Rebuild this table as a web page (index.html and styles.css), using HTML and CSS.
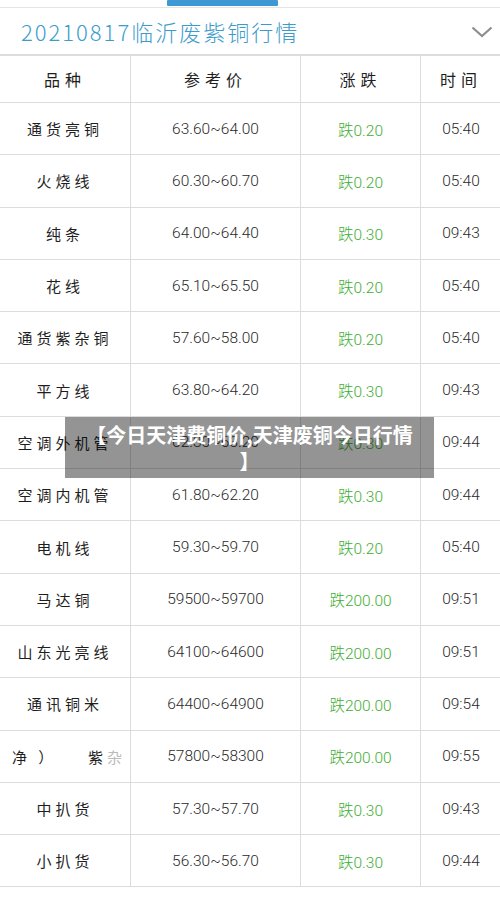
FILE: index.html
```html
<!DOCTYPE html>
<html lang="zh-CN">
<head>
  <meta charset="UTF-8">
  <title>临沂废紫铜行情</title>
  <link rel="stylesheet" href="styles.css">
</head>
<body>

  <div class="page">
    <div class="tabs">
      <div class="tab-active"></div>
    </div>

    <div class="title-bar">
      <span class="title">20210817临沂废紫铜行情</span>
      <svg class="chevron" width="22" height="12" viewBox="0 0 22 12">
        <path d="M1.5 1.5 L11 10 L20.5 1.5" fill="none" stroke="#8e8e8e" stroke-width="2.2"/>
      </svg>
    </div>

    <table class="quotes">
      <thead>
        <tr>
          <th class="col-name">品种</th>
          <th class="col-price">参考价</th>
          <th class="col-change">涨跌</th>
          <th class="col-time">时间</th>
        </tr>
      </thead>
      <tbody>
        <tr><td class="name">通货亮铜</td><td class="num">63.60~64.00</td><td class="down">跌0.20</td><td class="num">05:40</td></tr>
        <tr><td class="name">火烧线</td><td class="num">60.30~60.70</td><td class="down">跌0.20</td><td class="num">05:40</td></tr>
        <tr><td class="name">纯条</td><td class="num">64.00~64.40</td><td class="down">跌0.30</td><td class="num">09:43</td></tr>
        <tr><td class="name">花线</td><td class="num">65.10~65.50</td><td class="down">跌0.20</td><td class="num">05:40</td></tr>
        <tr><td class="name">通货紫杂铜</td><td class="num">57.60~58.00</td><td class="down">跌0.20</td><td class="num">05:40</td></tr>
        <tr><td class="name">平方线</td><td class="num">63.80~64.20</td><td class="down">跌0.30</td><td class="num">09:43</td></tr>
        <tr><td class="name">空调外机管</td><td class="num">62.30~63.20</td><td class="down">跌0.30</td><td class="num">09:44</td></tr>
        <tr><td class="name">空调内机管</td><td class="num">61.80~62.20</td><td class="down">跌0.30</td><td class="num">09:44</td></tr>
        <tr><td class="name">电机线</td><td class="num">59.30~59.70</td><td class="down">跌0.20</td><td class="num">05:40</td></tr>
        <tr><td class="name">马达铜</td><td class="num">59500~59700</td><td class="down">跌200.00</td><td class="num">09:51</td></tr>
        <tr><td class="name">山东光亮线</td><td class="num">64100~64600</td><td class="down">跌200.00</td><td class="num">09:51</td></tr>
        <tr><td class="name">通讯铜米</td><td class="num">64400~64900</td><td class="down">跌200.00</td><td class="num">09:54</td></tr>
        <tr><td class="name"><div class="cut"><span>净 ）</span><span>紫<em>杂</em></span></div></td><td class="num">57800~58300</td><td class="down">跌200.00</td><td class="num">09:55</td></tr>
        <tr><td class="name">中扒货</td><td class="num">57.30~57.70</td><td class="down">跌0.30</td><td class="num">09:43</td></tr>
        <tr><td class="name">小扒货</td><td class="num">56.30~56.70</td><td class="down">跌0.30</td><td class="num">09:44</td></tr>
      </tbody>
    </table>

    <div class="caption">【今日天津费铜价,天津废铜今日行情<br>】</div>
  </div>

</body>
</html>
```

FILE: styles.css
```css
body {
  margin: 0;
  background: #fff;
  font-family: "Noto Sans CJK SC", "Noto Sans", sans-serif;
  color: #222;
}

.page {
  position: relative;
  width: 500px;
}

.tabs {
  height: 7px;
  border-bottom: 1px solid #e4e4e4;
}

.tab-active {
  margin-left: 167px;
  width: 111px;
  height: 6px;
  background: #3d98d4;
  border-radius: 1px;
}

.title-bar {
  display: flex;
  align-items: center;
  justify-content: space-between;
  height: 46px;
  padding: 0 7px 0 21px;
  border-bottom: 1px solid #dedede;
}

.title {
  font-size: 22px;
  letter-spacing: 2px;
  color: #3b9ccc;
  font-weight: 300;
}

.chevron {
  margin-top: 2px;
}

.quotes {
  width: 498px;
  border-collapse: collapse;
  table-layout: fixed;
}

.quotes th,
.quotes td {
  border: 1px solid #dcdcdc;
  text-align: center;
  padding: 0;
}

.quotes tr > :first-child {
  border-left: none;
}

.quotes th {
  height: 46px;
  font-size: 16px;
  font-weight: 400;
  letter-spacing: 5px;
  color: #1e1e1e;
}

.col-name { width: 130px; }
.col-price { width: 169px; }
.col-change { width: 119px; }
.col-time { width: 80px; }

.quotes td {
  height: 51.3px;
}

.name {
  font-size: 15px;
  letter-spacing: 4px;
  color: #1e1e1e;
}

.num {
  font-family: Roboto, "Noto Sans", sans-serif;
  font-weight: 300;
  font-size: 15.5px;
  color: #2a2a2a;
}

.down {
  font-family: Roboto, "Noto Sans CJK SC", sans-serif;
  font-weight: 300;
  font-size: 15.5px;
  color: #3fae33;
}

.cut {
  display: flex;
  justify-content: space-between;
  padding: 0 4px 0 12px;
}

.cut em {
  font-style: normal;
  color: #bbb;
}

.caption {
  position: absolute;
  left: 65px;
  top: 417px;
  width: 369px;
  height: 61px;
  box-sizing: border-box;
  padding: 5px 8px;
  background: rgba(0, 0, 0, 0.42);
  color: #fff;
  font-size: 20px;
  font-weight: 700;
  line-height: 26px;
  text-align: center;
}
```
